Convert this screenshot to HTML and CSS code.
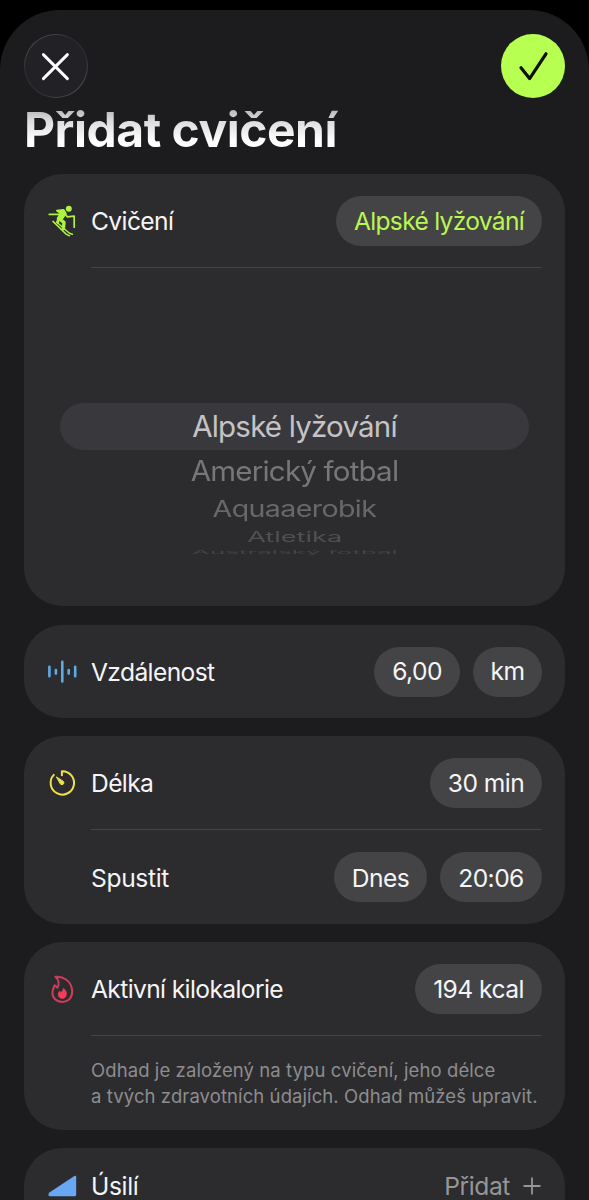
FILE: index.html
```
<!DOCTYPE html>
<html lang="cs">
<head>
<meta charset="utf-8">
<title>Přidat cvičení</title>
<link rel="stylesheet" href="styles.css">
</head>
<body>
<main class="sheet">
  <header class="toolbar">
    <button class="round close" aria-label="Zavřít">
      <svg width="61" height="61" viewBox="0 0 61 61"><path d="M17.4 18.6 41.4 42.6M41.4 18.6 17.4 42.6" fill="none" stroke="#fff" stroke-width="2.9" stroke-linecap="round"/></svg>
    </button>
    <button class="round confirm" aria-label="Potvrdit">
      <svg width="64" height="64" viewBox="0 0 64 64"><path d="M20 33.7 28.6 44.6 45 19.8" fill="none" stroke="#0b0f04" stroke-width="3.2" stroke-linecap="round" stroke-linejoin="round"/></svg>
    </button>
  </header>
  <h1 class="title">Přidat cvičení</h1>

  <section class="card card-exercise">
    <div class="row">
      <svg class="icon" width="30" height="34" viewBox="0 0 30 34" fill="none" stroke="#aef341" stroke-linecap="round" stroke-linejoin="round">
        <circle cx="20.8" cy="4.8" r="3" fill="#aef341" stroke="none"/>
        <path d="M16 8.5 19.2 12.8 26.2 12.2V23.2" stroke-width="1.7"/>
        <path d="M8.8 6.6 15.6 5.8 18 9.6 14.6 14.4H9.6L12.4 9.4Z" fill="#aef341" stroke-width="1.6"/>
        <path d="M1.3 10.4H12" stroke-width="1.7"/>
        <path d="M11 14.6 16 18.4 15.4 24.6" stroke-width="3.4"/>
        <path d="M10.4 14.4 9.8 18.4" stroke-width="2.8"/>
        <path d="M5 17.4 18.4 30.4 21.4 31.8M8.6 18 21.4 29.2 24.4 30.2" stroke-width="1.5"/>
      </svg>
      <span class="label t-cviceni">Cvičení</span>
      <span class="pill accent t-alp">Alpské lyžování</span>
    </div>
    <hr class="divider">
    <div class="picker">
      <div class="opt opt0"><span>Alpské lyžování</span></div>
      <div class="opt opt1"><span>Americký fotbal</span></div>
      <div class="opt opt2"><span>Aquaaerobik</span></div>
      <div class="opt opt3"><span>Atletika</span></div>
      <div class="opt opt4"><span>Australský fotbal</span></div>
    </div>
  </section>

  <section class="card card-distance">
    <div class="row">
      <svg class="icon" width="30" height="34" viewBox="0 0 30 34" fill="none" stroke="#5caae6" stroke-width="2.6" stroke-linecap="round"><path d="M1.4 11.7V21.3M7.9 15V18.6M14.3 6.8V26.4M20.7 15V18.6M27.2 11.7V21.3"/></svg>
      <span class="label t-vzd">Vzdálenost</span>
      <span class="pill t-num">6,00</span>
      <span class="pill t-km">km</span>
    </div>
  </section>

  <section class="card card-time">
    <div class="row">
      <svg class="icon" width="30" height="34" viewBox="0 0 30 34" fill="none" stroke="#eee04d" stroke-width="2" stroke-linecap="round" stroke-linejoin="round">
        <path d="M13.9 9.3V5.2A11.7 11.7 0 1 1 5.8 8.9"/>
        <path d="M8.7 11.1 15.5 15.5A2 2 0 0 1 12.7 18.3Z" fill="#eee04d" stroke-width="1"/>
      </svg>
      <span class="label t-delka">Délka</span>
      <span class="pill t-min">30 min</span>
    </div>
    <hr class="divider">
    <div class="row">
      <span class="icon"></span>
      <span class="label t-spustit">Spustit</span>
      <span class="pill low t-dnes">Dnes</span>
      <span class="pill low t-hour">20:06</span>
    </div>
  </section>

  <section class="card card-energy">
    <div class="row">
      <svg class="icon" width="30" height="34" viewBox="0 0 30 34" fill="none" stroke="#cf3c58" stroke-width="2" stroke-linejoin="round">
        <path d="M7.4 4.8C14.4 4 24 8.5 24.2 19.5C24.2 26 20 29.9 14.5 29.9C8.4 29.9 4.4 26 4.4 20.7C4.4 17.6 5.9 16.1 6.6 13.3L9.6 15.6C11.4 12.5 10.9 7.6 7.4 4.8Z"/>
        <path d="M15.5 16.4C17.9 18.2 18.5 20.3 18.3 22.8C18 25.3 16.5 26.4 14.4 26.4C11.9 26.4 10.3 24.8 10.3 22.5C10.3 21.3 10.7 20.3 11.3 19.4L13.3 20.4C14.3 19.4 15.1 17.8 15.5 16.4Z" fill="#f43c5c" stroke="#f43c5c" stroke-width=".8"/>
      </svg>
      <span class="label t-akt">Aktivní kilokalorie</span>
      <span class="pill t-kcal">194 kcal</span>
    </div>
    <hr class="divider">
    <p class="note"><span class="n1">Odhad je založený na typu cvičení, jeho délce</span><br><span class="n2">a tvých zdravotních údajích. Odhad můžeš upravit.</span></p>
  </section>

  <section class="card card-effort">
    <div class="row row-effort">
      <svg class="icon" width="30" height="34" viewBox="0 0 30 34"><path d="M1.4 23.6 26.4 7Q28.2 6 28.2 7.8V25.8Q28.2 27.3 26.7 27.3H1.4Q-.6 26.3 1.4 23.6Z" fill="#69a7f5"/></svg>
      <span class="label t-usili">Úsilí</span>
      <span class="add">Přidat</span>
      <svg class="plus" width="18" height="18" viewBox="0 0 18 18"><path d="M9 1.2V16.8M1.2 9H16.8" stroke="#969698" stroke-width="1.8" stroke-linecap="round"/></svg>
    </div>
  </section>
</main>
</body>
</html>
```
FILE: styles.css
```
* { box-sizing: border-box; }
html, body { height: 100%; }
body {
  margin: 0;
  padding-top: 10px;
  background: #000;
  color: #f5f5f7;
  font-family: Inter, "Liberation Sans", sans-serif;
  font-size: 24.6px;
  overflow: hidden;
}
.sheet {
  height: 1190px;
  padding: 24px 24px 0;
  background: #1c1c1e;
  border-radius: 60px 60px 0 0;
  overflow: hidden;
}
.toolbar { display: flex; justify-content: space-between; height: 65px; }
.round {
  width: 64px;
  height: 64px;
  padding: 0;
  border: 0;
  border-radius: 50%;
  display: grid;
  place-items: center;
}
.close {
  background: linear-gradient(#222226, #222226) padding-box, linear-gradient(145deg, #59595b, #303033 35%, #303033 60%, #59595b) border-box;
  border: 1.5px solid transparent;
}
.confirm { background: #b7ff50; }
.title {
  margin: 0 0 14px;
  height: 61px;
  line-height: 62px;
  font-size: 48px;
  font-weight: 700;
  white-space: nowrap;
  letter-spacing: -0.5px;
  background: linear-gradient(#aaa 6px, #dcdcde 22px, #fff 42px);
  -webkit-background-clip: text;
  background-clip: text;
  color: transparent;
}
.card {
  margin: 0 0 18px;
  padding: 22px 23px 0 24px;
  background: #2c2c2e;
  border-radius: 38px;
  overflow: hidden;
}
.card-exercise { height: 432px; margin-bottom: 19px; }
.card-distance { height: 93px; }
.card-time { height: 188px; }
.card-energy { height: 188px; }
.card-effort { height: 93px; margin: 0; }
.row { display: flex; align-items: center; height: 50px; }
.icon { flex: none; width: 30px; height: 34px; margin-right: 13px; }
.label { flex: 1; white-space: nowrap; letter-spacing: -0.62px; }
.pill {
  flex: none;
  height: 50px;
  line-height: 50px;
  margin-left: 13px;
  border-radius: 25px;
  background: #444447;
  text-align: center;
  white-space: nowrap;
  letter-spacing: -0.55px;
}
.pill.accent { color: #b9f651; letter-spacing: -0.7px; }
.pill.low { line-height: 52px; }
.divider { height: 1px; margin: 21px 0 22px 43px; border: 0; background: #454547; }
.label.t-spustit, .label.t-usili { letter-spacing: -0.35px; }
.t-spustit { padding-top: 1px; }
.t-alp { width: 206px; }
.t-num { width: 86px; }
.t-km { width: 69px; }
.t-min { width: 112px; }
.t-dnes { width: 93px; }
.t-hour { width: 102px; }
.t-kcal { width: 127px; }
.card-distance .pill, .card-distance .label { line-height: 49px; }
.picker {
  height: 270px;
  margin: 0 13px 0 12px;
  padding-top: 113px;
  font-size: 29.5px;
}
.opt { display: grid; place-items: center; white-space: nowrap; }
.opt span { display: block; line-height: 36px; letter-spacing: -0.8px; }
.opt0 { height: 47px; padding-bottom: 2px; border-radius: 24px; background: #39393d; color: #c4c4c6; }
.opt1 { height: 41px; color: #77777a; }
.opt1 span { transform: scaleY(.94); }
.opt2 { height: 35px; color: #68686b; }
.opt2 span { transform: scale(.97, .76); letter-spacing: -0.65px; }
.opt3 { height: 21px; color: #505053; }
.opt3 span { transform: scale(.92, .48); letter-spacing: 0; }
.opt4 { height: 9px; color: #444447; }
.opt4 span { transform: scale(.88, .16); letter-spacing: 0; }
.opt2, .opt3, .opt4 { grid-template-rows: 100%; }
.note {
  margin: -1px -12px 0 43px;
  color: #8d8d90;
  font-size: 18.5px;
  line-height: 26px;
  letter-spacing: 0.09px;
  white-space: nowrap;
}
.row-effort { height: 34px; }
.card-effort { padding-top: 21px; }
.add { color: #969698; margin-right: 13px; letter-spacing: -0.4px; }
.plus { flex: none; margin-right: 1px; }
```
